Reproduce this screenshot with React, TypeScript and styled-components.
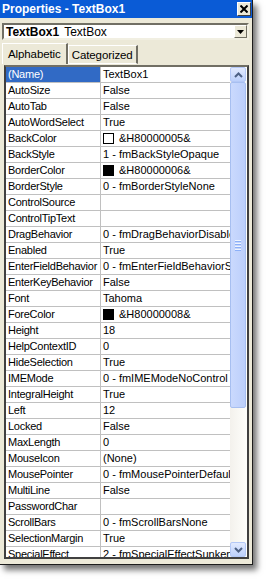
import styled, { createGlobalStyle } from "styled-components";

const GlobalStyle = createGlobalStyle`
  body {
    margin: 0;
    background: #ffffff;
    font-family: "Liberation Sans", Arial, sans-serif;
  }
`;

const Page = styled.div`
  width: 268px;
  height: 582px;
  overflow: hidden;
`;

const Window = styled.div`
  width: 252px;
  height: 564px;
  background: #ece9d8;
  border-right: 1px solid #1c1c1c;
  border-bottom: 1px solid #1c1c1c;
  box-shadow: 4px 5px 6px rgba(0, 0, 0, 0.55);
  display: flex;
  flex-direction: column;
  font-size: 11px;
  color: #000;
`;

const TitleBar = styled.div`
  height: 18px;
  background: #0a5bd6;
  display: flex;
  align-items: center;
  justify-content: space-between;
  padding: 0 1px 0 2px;
`;

const Title = styled.span`
  color: #fff;
  font-weight: bold;
  font-size: 12px;
`;

const CloseButton = styled.div`
  width: 12px;
  height: 12px;
  background: #ece9d8;
  border: 1px solid;
  border-color: #fff #404040 #404040 #fff;
  display: flex;
  align-items: center;
  justify-content: center;
`;

const Combo = styled.div`
  margin: 5px 0 0 2px;
  width: 241px;
  height: 13px;
  background: #fff;
  border: 2px solid;
  border-color: #716f64 #f1efe2 #f1efe2 #716f64;
  display: flex;
  align-items: center;
  padding-left: 2px;
  gap: 5px;
  font-size: 12px;
`;

const ComboName = styled.span`
  font-weight: bold;
`;

const ComboType = styled.span`
  flex: 1;
`;

const DropButton = styled.div`
  width: 11px;
  height: 11px;
  background: #ece9d8;
  border: 1px solid;
  border-color: #fff #716f64 #716f64 #fff;
  display: flex;
  align-items: center;
  justify-content: center;
`;

const Tabs = styled.div`
  display: flex;
  align-items: flex-end;
  margin: 3px 0 0 2px;
  height: 21px;
`;

const Tab = styled.div<{ $active?: boolean }>`
  height: ${(p) => (p.$active ? 20 : 17)}px;
  padding: 0 ${(p) => (p.$active ? 5 : 3)}px;
  display: flex;
  align-items: center;
  background: #ece9d8;
  border-top: 1px solid #fff;
  border-left: 1px solid #fff;
  border-right: 2px solid #716f64;
  border-bottom: ${(p) => (p.$active ? "none" : "1px solid #fff")};
  font-size: 11.5px;
  letter-spacing: -0.1px;
`;

const Grid = styled.div`
  margin: 1px 0 0 4px;
  width: 241px;
  height: 490px;
  border: 2px solid;
  border-color: #716f64 #404040 #404040 #404040;
  background: #fff;
  display: flex;
  overflow: hidden;
`;

const Rows = styled.div`
  flex: 1;
  display: flex;
  flex-direction: column;
  overflow: hidden;
`;

const Row = styled.div`
  display: flex;
  height: 15px;
  flex: none;
  border-bottom: 1px solid #c0c0c0;
`;

const NameCell = styled.div<{ $selected?: boolean }>`
  width: 92px;
  padding-left: 2px;
  flex: none;
  line-height: 15px;
  letter-spacing: -0.25px;
  white-space: nowrap;
  overflow: hidden;
  border-right: 1px solid #c0c0c0;
  background: ${(p) => (p.$selected ? "#316ac5" : "#fff")};
  color: ${(p) => (p.$selected ? "#fff" : "#000")};
`;

const ValueCell = styled.div`
  flex: 1;
  min-width: 0;
  padding-left: 2px;
  line-height: 15px;
  white-space: nowrap;
  overflow: hidden;
  display: flex;
  align-items: center;
  gap: 5px;
`;

const Swatch = styled.span<{ $color: string }>`
  width: 9px;
  height: 9px;
  flex: none;
  border: 1px solid #000;
  background: ${(p) => p.$color};
`;

const ScrollBar = styled.div`
  width: 17px;
  flex: none;
  display: flex;
  flex-direction: column;
  background: linear-gradient(to right, #f3f1ec, #fefefb);
`;

const ScrollButton = styled.div`
  height: 15px;
  margin: 0 1px 0 0;
  border: 1px solid #b4c8f6;
  border-radius: 2px;
  background: linear-gradient(to bottom, #e2eafe, #bcd0fb);
  display: flex;
  align-items: center;
  justify-content: center;
  box-sizing: border-box;
`;

const Track = styled.div`
  flex: 1;
  display: flex;
  flex-direction: column;
`;

const Thumb = styled.div`
  height: 326px;
  margin-right: 1px;
  border: 1px solid #a7bff0;
  border-radius: 2px;
  background: linear-gradient(to right, #cad9fd, #bccffb);
  display: flex;
  flex-direction: column;
  align-items: center;
  justify-content: center;
  gap: 1px;
  box-sizing: border-box;
`;

const Grip = styled.span`
  width: 6px;
  height: 1px;
  background: #eef4fe;
  border-bottom: 1px solid #8cb0f8;
`;

type Prop = { name: string; value: string; color?: string };

const props: Prop[] = [
  { name: "(Name)", value: "TextBox1" },
  { name: "AutoSize", value: "False" },
  { name: "AutoTab", value: "False" },
  { name: "AutoWordSelect", value: "True" },
  { name: "BackColor", value: "&H80000005&", color: "#fff" },
  { name: "BackStyle", value: "1 - fmBackStyleOpaque" },
  { name: "BorderColor", value: "&H80000006&", color: "#000" },
  { name: "BorderStyle", value: "0 - fmBorderStyleNone" },
  { name: "ControlSource", value: "" },
  { name: "ControlTipText", value: "" },
  { name: "DragBehavior", value: "0 - fmDragBehaviorDisabled" },
  { name: "Enabled", value: "True" },
  { name: "EnterFieldBehavior", value: "0 - fmEnterFieldBehaviorSelectAll" },
  { name: "EnterKeyBehavior", value: "False" },
  { name: "Font", value: "Tahoma" },
  { name: "ForeColor", value: "&H80000008&", color: "#000" },
  { name: "Height", value: "18" },
  { name: "HelpContextID", value: "0" },
  { name: "HideSelection", value: "True" },
  { name: "IMEMode", value: "0 - fmIMEModeNoControl" },
  { name: "IntegralHeight", value: "True" },
  { name: "Left", value: "12" },
  { name: "Locked", value: "False" },
  { name: "MaxLength", value: "0" },
  { name: "MouseIcon", value: "(None)" },
  { name: "MousePointer", value: "0 - fmMousePointerDefault" },
  { name: "MultiLine", value: "False" },
  { name: "PasswordChar", value: "" },
  { name: "ScrollBars", value: "0 - fmScrollBarsNone" },
  { name: "SelectionMargin", value: "True" },
  { name: "SpecialEffect", value: "2 - fmSpecialEffectSunken" },
  { name: "TabIndex", value: "0" },
];

const Chevron = ({ up }: { up?: boolean }) => (
  <svg width="9" height="6" viewBox="0 0 9 6">
    <path
      d={up ? "M1 5 L4.5 1.5 L8 5" : "M1 1 L4.5 4.5 L8 1"}
      fill="none"
      stroke="#4d6185"
      strokeWidth="2"
    />
  </svg>
);

const App = () => {
  return (
    <Page>
      <GlobalStyle />
      <Window>
        <TitleBar>
          <Title>Properties - TextBox1</Title>
          <CloseButton>
            <svg width="8" height="8" viewBox="0 0 8 8">
              <path d="M0.5 0.5 L7.5 7.5 M7.5 0.5 L0.5 7.5" stroke="#000" strokeWidth="2" />
            </svg>
          </CloseButton>
        </TitleBar>
        <Combo>
          <ComboName>TextBox1</ComboName>
          <ComboType>TextBox</ComboType>
          <DropButton>
            <svg width="7" height="4" viewBox="0 0 7 4">
              <path d="M0 0 H7 L3.5 4 Z" fill="#000" />
            </svg>
          </DropButton>
        </Combo>
        <Tabs>
          <Tab $active>Alphabetic</Tab>
          <Tab>Categorized</Tab>
        </Tabs>
        <Grid>
          <Rows>
            {props.map((p, i) => (
              <Row key={p.name}>
                <NameCell $selected={i === 0}>{p.name}</NameCell>
                <ValueCell>
                  {p.color && <Swatch $color={p.color} />}
                  {p.value}
                </ValueCell>
              </Row>
            ))}
          </Rows>
          <ScrollBar>
            <ScrollButton>
              <Chevron up />
            </ScrollButton>
            <Track>
              <Thumb>
                <Grip />
                <Grip />
                <Grip />
                <Grip />
              </Thumb>
            </Track>
            <ScrollButton>
              <Chevron />
            </ScrollButton>
          </ScrollBar>
        </Grid>
      </Window>
    </Page>
  );
};

export default App;
